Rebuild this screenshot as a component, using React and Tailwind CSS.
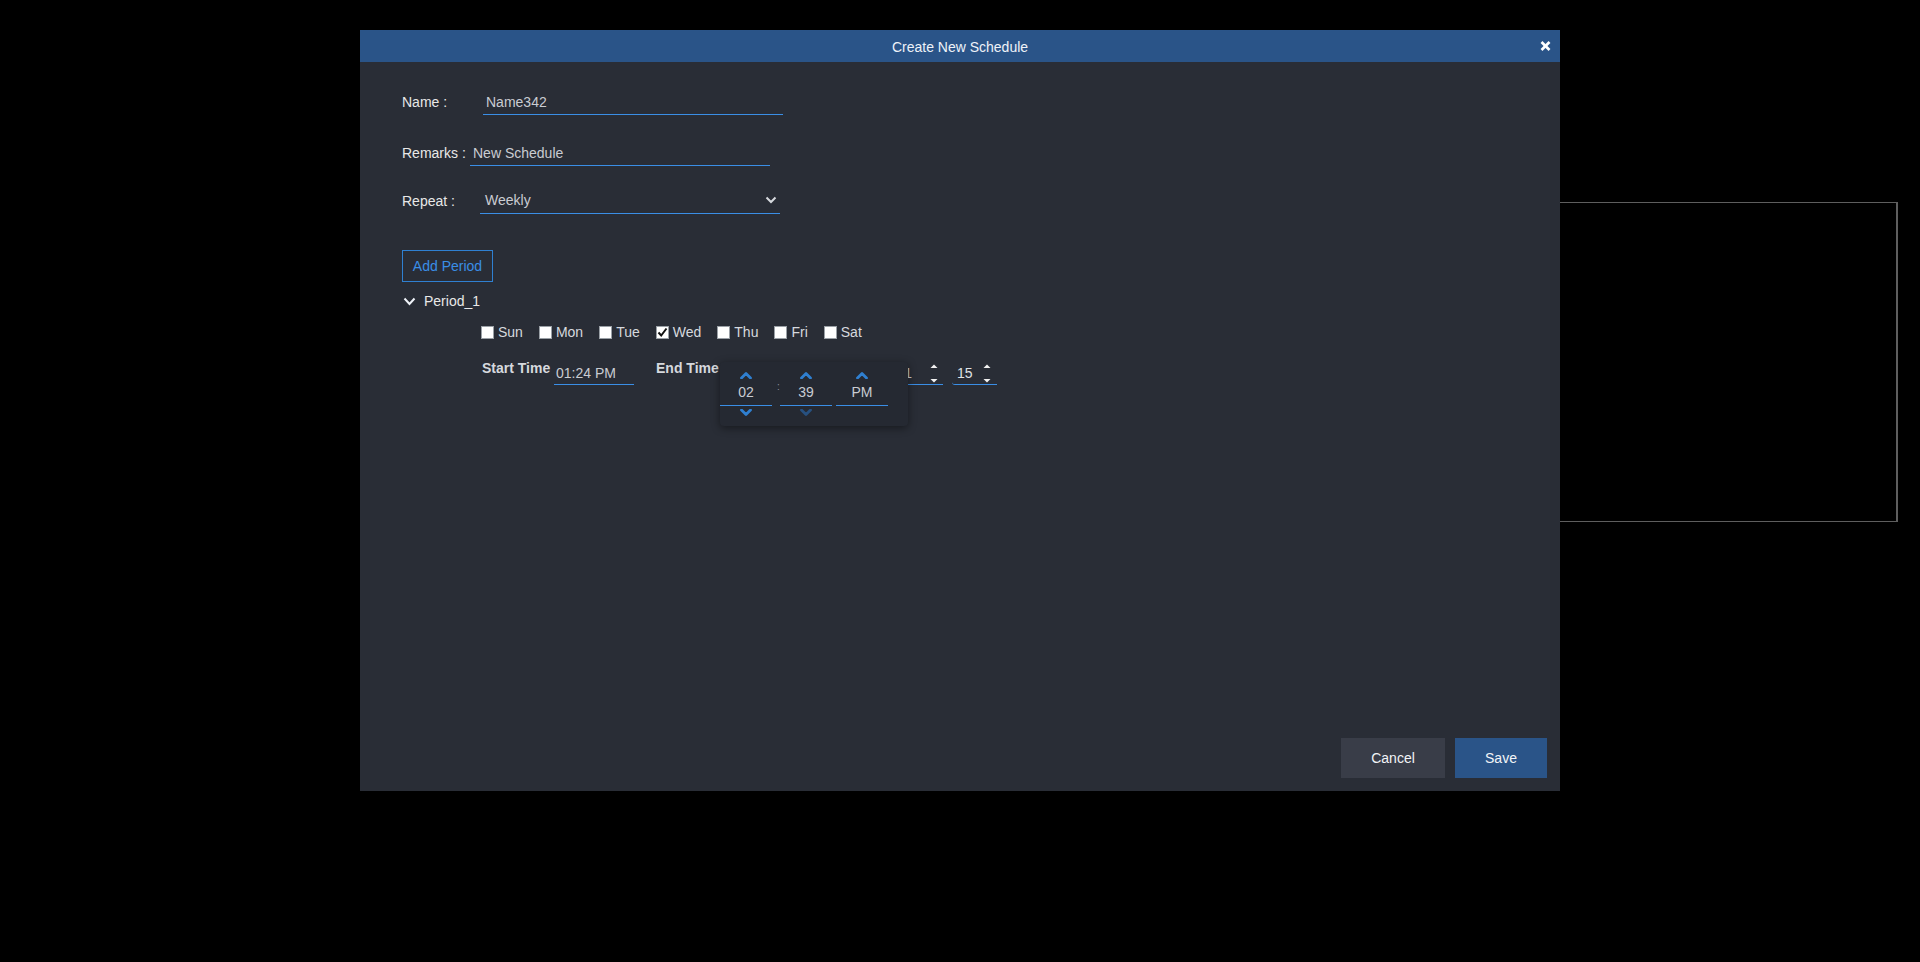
import React from 'react';

const font = { fontFamily: '"Liberation Sans", Arial, sans-serif' };

// small chevron used by the time picker
const Chevron = ({ up, color }) => (
  <svg width="12" height="7" viewBox="0 0 12 7" className="block">
    <polyline
      points={up ? '1.5,6 6,1.5 10.5,6' : '1.5,1 6,5.5 10.5,1'}
      fill="none"
      stroke={color}
      strokeWidth="2.8"
      strokeLinecap="round"
      strokeLinejoin="round"
    />
  </svg>
);

const Spinner = () => (
  <svg width="8" height="19" viewBox="0 0 8 19" className="block">
    <polygon points="0.5,4 4,0.5 7.5,4" fill="#f2f2f2" />
    <polygon points="0.5,15 4,18.5 7.5,15" fill="#f2f2f2" />
  </svg>
);

const DayBox = ({ label, checked }) => (
  <div className="flex items-center">
    <span className="w-[13px] h-[13px] bg-white border border-[#9aa0a6] flex items-center justify-center">
      {checked && (
        <svg width="11" height="11" viewBox="0 0 11 11">
          <polyline points="1.5,5.5 4.2,8.5 9.5,1.5" fill="none" stroke="#111" strokeWidth="2" />
        </svg>
      )}
    </span>
    <span className="ml-[4px] text-[14px] text-[#d6d9de] leading-[18px]">{label}</span>
  </div>
);

const PickerColumn = ({ value, downColor }) => (
  <div className="w-[52px] flex flex-col items-center pt-[10px]">
    <Chevron up color="#2f7fd0" />
    <div className="mt-[1px] w-full h-[26px] border-b border-[#3a8ee6] flex items-center justify-center text-[14px] text-[#c9ccd2]">
      {value}
    </div>
    <div className="mt-[3px]">
      {downColor && <Chevron color={downColor} />}
    </div>
  </div>
);

const App = () => {
  const days = ['Sun', 'Mon', 'Tue', 'Wed', 'Thu', 'Fri', 'Sat'];

  return (
    <div className="relative w-[1920px] h-[962px] bg-black overflow-hidden" style={font}>
      {/* preview frame behind the dialog */}
      <div className="absolute left-[1200px] top-[202px] w-[698px] h-[320px] border border-[#5e5e5e] border-r-2" />

      {/* dialog */}
      <div className="absolute left-[360px] top-[30px] w-[1200px] h-[761px] bg-[#292d36] flex flex-col">
        <div className="relative h-[32px] pt-[2px] bg-[#2a5488] flex items-center justify-center">
          <span className="text-[14px] text-[#eef2f8]">Create New Schedule</span>
          <svg width="11" height="10" viewBox="0 0 11 10" className="absolute right-[9px] top-[11px]">
            <line x1="1.5" y1="1" x2="9.5" y2="9" stroke="#fff" strokeWidth="2.6" />
            <line x1="9.5" y1="1" x2="1.5" y2="9" stroke="#fff" strokeWidth="2.6" />
          </svg>
        </div>

        <div className="flex-1 pl-[42px] pt-[28px] flex flex-col items-start">
          {/* Name */}
          <div className="flex items-center h-[25px]">
            <span className="w-[81px] text-[14px] text-[#e8e8e8]">Name :</span>
            <div className="w-[300px] h-[25px] border-b border-[#3a8ee6] pl-[3px] flex items-center text-[14px] text-[#c9ccd2]">
              Name342
            </div>
          </div>

          {/* Remarks */}
          <div className="mt-[26px] flex items-center h-[25px]">
            <span className="w-[68px] text-[14px] text-[#e8e8e8]">Remarks :</span>
            <div className="w-[300px] h-[25px] border-b border-[#3a8ee6] pl-[3px] flex items-center text-[14px] text-[#c9ccd2]">
              New Schedule
            </div>
          </div>

          {/* Repeat */}
          <div className="mt-[22px] flex items-center h-[26px]">
            <span className="w-[78px] text-[14px] text-[#e8e8e8]">Repeat :</span>
            <div className="w-[300px] h-[26px] border-b border-[#3a8ee6] pl-[5px] pr-[3px] flex items-center justify-between text-[14px] text-[#c9ccd2]">
              <span>Weekly</span>
              <svg width="12" height="8" viewBox="0 0 12 8" className="-mt-[2px]">
                <polyline points="1.5,1.5 6,6 10.5,1.5" fill="none" stroke="#d6d9de" strokeWidth="2" />
              </svg>
            </div>
          </div>

          <button className="mt-[36px] w-[91px] h-[32px] border border-[#2f80d1] text-[14px] text-[#3a8ee6]">
            Add Period
          </button>

          {/* Period_1 */}
          <div className="mt-[9px] h-[20px] flex items-center">
            <svg width="13" height="9" viewBox="0 0 13 9" className="ml-[1px]">
              <polyline points="1.5,1.5 6.5,7 11.5,1.5" fill="none" stroke="#eef2f8" strokeWidth="2" />
            </svg>
            <span className="ml-[8px] text-[14px] text-[#e8e8e8]">Period_1</span>
          </div>

          {/* days */}
          <div className="mt-[12px] pl-[79px] h-[18px] flex items-center gap-[16px]">
            {days.map((d) => (
              <DayBox key={d} label={d} checked={d === 'Wed'} />
            ))}
          </div>

          {/* times */}
          <div className="mt-[21px] pl-[80px] flex items-start">
            <span className="w-[72px] h-[12px] leading-[12px] text-[14px] font-bold text-[#d6d9de]">Start Time</span>
            <div className="w-[80px] h-[23px] border-b border-[#3a8ee6] pl-[2px] flex items-center text-[14px] text-[#c9ccd2]">
              01:24 PM
            </div>
            <span className="ml-[22px] w-[64px] h-[12px] leading-[12px] text-[14px] font-bold text-[#d6d9de]">End Time</span>

            <div className="relative">
              <div className="w-[223px] h-[23px] border-b border-[#3a8ee6] pr-[5px] flex items-center justify-end text-[14px] text-[#c9ccd2]">
                <span>1</span>
                <span className="ml-[18px]"><Spinner /></span>
              </div>

              {/* time picker popup */}
              <div className="absolute left-0 top-0 w-[188px] h-[64px] rounded-[4px] bg-[#252932] shadow-[0_2px_8px_rgba(0,0,0,0.45)] flex">
                <PickerColumn value="02" downColor="#2f7fd0" />
                <div className="w-[8px] pt-[20px] pl-[5px] text-[10px] leading-[10px] text-[#8a8f99]">:</div>
                <PickerColumn value="39" downColor="#27507f" />
                <div className="w-[4px]" />
                <PickerColumn value="PM" />
              </div>
            </div>

            <div className="ml-[9px] w-[45px] h-[23px] border-b border-[#3a8ee6] rounded-bl-[3px] pl-[5px] pr-[6px] flex items-center justify-between text-[14px] text-[#dfe2e6]">
              <span>15</span>
              <Spinner />
            </div>
          </div>
        </div>

        <div className="flex justify-end gap-[10px] pr-[13px] pb-[13px]">
          <button className="w-[104px] h-[40px] bg-[#393d48] text-[14px] text-[#f2f4f7]">Cancel</button>
          <button className="w-[92px] h-[40px] bg-[#2a5488] text-[14px] text-[#f2f4f7]">Save</button>
        </div>
      </div>
    </div>
  );
};

export default App;
